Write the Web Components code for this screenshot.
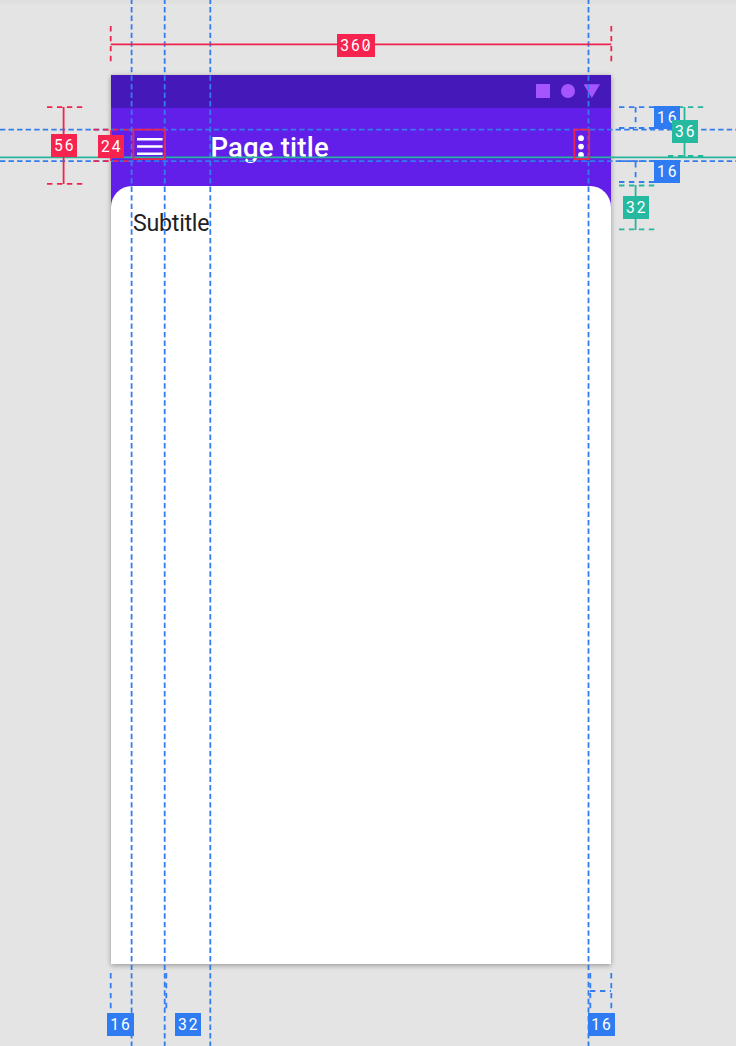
<!DOCTYPE html>
<html lang="en">
<head>
<meta charset="utf-8">
<title>App bar layout spec</title>
<style>
html,body{margin:0;background:#e4e4e4}
body{font-family:Roboto,"Liberation Sans",sans-serif}
</style>
</head>
<body>
<spec-sheet>
  <phone-frame>
    <status-bar slot="status"></status-bar>
    <app-bar slot="bar">Page title</app-bar>
    <span>Subtitle</span>
  </phone-frame>
  <spec-guides slot="overlay"></spec-guides>
</spec-sheet>
<script>
function define(name, html, connected) {
  customElements.define(name, class extends HTMLElement {
    constructor() {
      super();
      this.attachShadow({ mode: 'open' }).innerHTML = html;
    }
    connectedCallback() {
      if (connected) connected(this);
    }
  });
}

define('spec-sheet', `<style>
:host{display:flex;justify-content:flex-start;position:relative;box-sizing:border-box;width:736px;height:1046px;padding:74.7px 124.7px 81.7px 110.7px;overflow:hidden;background:linear-gradient(#dedede,#e4e4e4 6px)}
</style><slot></slot><slot name="overlay"></slot>`);

define('phone-frame', `<style>
:host{display:flex;flex-direction:column;flex:1;background:#611fe9;box-shadow:0 2px 5px rgba(0,0,0,.25),0 0 5px rgba(0,0,0,.1)}
main{flex:1;background:#fff;border-radius:21px 21px 0 0;padding:23px 22.3px;font-size:23.2px;letter-spacing:-.25px;line-height:28px;color:#212124}
</style><slot name="status"></slot><slot name="bar"></slot><main><slot></slot></main>`);

define('status-bar', `<style>
:host{display:flex;align-items:center;justify-content:flex-end;height:33.3px;background:#4519b9;padding-right:11px}
svg{display:block}
</style><svg width="64" height="14" viewBox="0 0 64 14" fill="#a555fd"><path d="M0 0h14v14H0z"/><circle cx="32" cy="7" r="7"/><path d="M47.6 .3H64L55.8 14z"/></svg>`);

define('app-bar', `<style>
:host{display:flex;align-items:center;height:77.7px;color:#fff;box-sizing:border-box;padding:0 27.7px 0 26px}
.menu{flex:none;margin-right:47.7px}
.title{flex:1;font-size:27.5px;font-weight:500;line-height:32px;padding-top:3px;letter-spacing:.2px}
svg{display:block}
</style>
<svg class="menu" width="26" height="17" viewBox="0 0 26 17" fill="#fff"><path d="M0 0h25.6v2.6H0zM0 7.2h25.6v2.6H0zM0 14.4h25.6V17H0z"/></svg>
<span class="title"><slot></slot></span>
<svg width="6" height="23" viewBox="0 0 6 23" fill="#fff"><circle cx="3" cy="3.2" r="2.9"/><circle cx="3" cy="11.6" r="2.9"/><circle cx="3" cy="20" r="2.9"/></svg>`);

define('spec-badge', `<style>
:host{position:absolute;display:flex;align-items:center;justify-content:center;box-sizing:border-box;width:26.3px;height:23px;padding-top:1px;color:#fff;background:#2f7bf2;font-size:15.6px;line-height:20px;letter-spacing:2px;text-indent:1px}
:host([tone=red]){background:#f7234f}
:host([tone=green]){background:#25baa0}
:host([wide]){width:38.3px}
:host([wide])::after{content:"";position:absolute;left:26.3px;top:11.6px;width:7px;height:1.2px;background:currentColor;transform:rotate(-58deg)}
</style><slot></slot>`, el => {
  el.style.left = el.getAttribute('x') + 'px';
  el.style.top = el.getAttribute('y') + 'px';
});

define('spec-guides', `<style>
:host{position:absolute;inset:0;pointer-events:none}
svg{position:absolute;inset:0}
path{fill:none;stroke-width:1.8}
.guide{stroke-dasharray:5.4 3.15}
.b{stroke:#357cec}.r{stroke:#ee244e}.g{stroke:#27b59b}
.d{stroke-dasharray:5.4 4.55}
</style>
<svg width="736" height="1046" viewBox="0 0 736 1046">
<path class="b guide" stroke-dashoffset="1.5" d="M131.6 0V1046"/>
<path class="b guide" stroke-dashoffset="1.5" d="M164.7 0V1046"/>
<path class="b guide" stroke-dashoffset="1.5" d="M210.3 0V1046"/>
<path class="b guide" stroke-dashoffset="1.5" d="M588.5 0V1046"/>
<path class="b guide" d="M0 129.6H736"/>
<path class="b guide" d="M0 161.2H736"/>
<path class="g" d="M0 157.4H736"/>
<path class="r" d="M110.7 44.4H611.3M63.6 107V184M111 130V161"/>
<path class="r d" d="M110.7 26V61.5"/><path class="r d" d="M611.3 26V61.5"/>
<path class="r d" d="M47 107.2H82.5"/><path class="r d" d="M47 183.9H82.5"/>
<path class="r d" d="M93.3 129.6H129"/><path class="r d" d="M93.3 161.2H129"/>
<path class="r" d="M133.4 129.7H165V159.2H133.4zM574.4 129.7H589.2V159.2H574.4z"/>
<path class="b d" d="M619 107.2H654.5"/><path class="b d" d="M619 128H654.5"/>
<path class="b d" d="M635.6 107V128"/>
<path class="b d" d="M619 161.2H654.5"/><path class="b d" d="M619 182H654.5"/>
<path class="b d" d="M635.6 162V182"/>
<path class="g d" d="M668 107.2H703.5"/><path class="g d" d="M668 156H703.5"/>
<path class="g" d="M684.5 107V157"/>
<path class="g d" d="M619 185.5H654.5"/><path class="g d" d="M619 229.3H654.5"/>
<path class="g" d="M635.6 185V230"/>
<path class="b d" d="M110.7 973V1008.5"/><path class="b d" d="M166.3 973V1008.5"/><path class="b d" d="M590.3 973V1008.5"/><path class="b d" d="M611.3 973V1008.5"/>
<path class="b d" d="M590 991H611"/>
</svg>
<spec-badge tone="red" wide x="336.7" y="34.2">360</spec-badge>
<spec-badge tone="red" x="51" y="133.7">56</spec-badge>
<spec-badge tone="red" x="98" y="135.3">24</spec-badge>
<spec-badge x="654" y="105.7">16</spec-badge>
<spec-badge tone="green" x="672" y="119.5">36</spec-badge>
<spec-badge x="654" y="160">16</spec-badge>
<spec-badge tone="green" x="623" y="196.3">32</spec-badge>
<spec-badge x="107.3" y="1013">16</spec-badge>
<spec-badge x="175" y="1013">32</spec-badge>
<spec-badge x="588.3" y="1013">16</spec-badge>`);
</script>
</body>
</html>
